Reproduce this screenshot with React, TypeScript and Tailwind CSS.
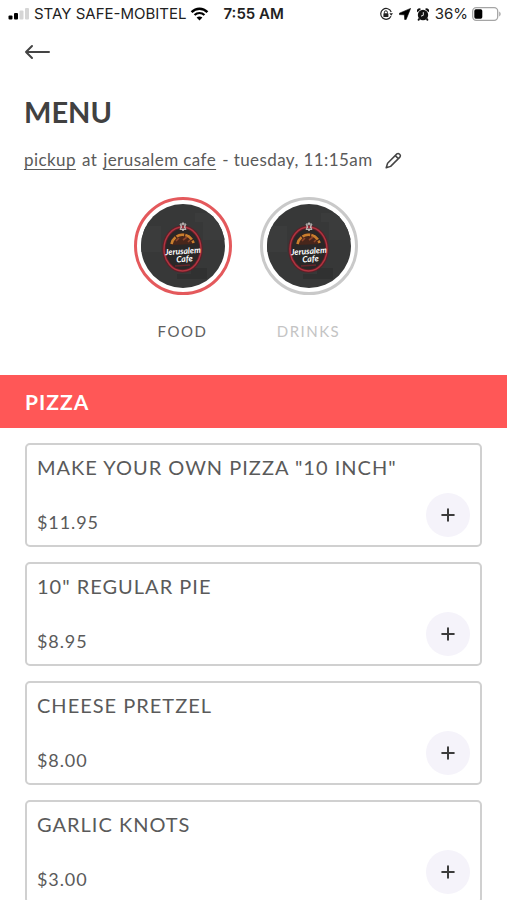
import { Plus } from "lucide-react";

interface MenuItem {
  name: string;
  price: string;
}

interface CategoryButtonProps {
  label: string;
  active?: boolean;
}

const items: MenuItem[] = [
  { name: 'MAKE YOUR OWN PIZZA "10 INCH"', price: "$11.95" },
  { name: '10" REGULAR PIE', price: "$8.95" },
  { name: "CHEESE PRETZEL", price: "$8.00" },
  { name: "GARLIC KNOTS", price: "$3.00" },
];

const StatusBar = () => (
  <div className="flex h-7 items-center justify-between pr-1.5 pl-2 font-['Inter',sans-serif] text-[15px] text-[#222]">
    <div className="flex items-center">
      <svg width="22" height="12" viewBox="0 0 22 12" aria-hidden="true">
        <rect x="0.5" y="7.5" width="4" height="4" rx="1" fill="#000" />
        <rect x="6" y="5" width="4" height="6.5" rx="1" fill="#000" />
        <rect x="11.5" y="2.5" width="4" height="9" rx="1" fill="#d5d5d5" />
        <rect x="17" y="0" width="4" height="11.5" rx="1" fill="#d5d5d5" />
      </svg>
      <span className="ml-1">STAY SAFE-MOBITEL</span>
      <svg className="ml-1" width="19" height="14" viewBox="0 0 20 15" fill="none" stroke="#000" aria-hidden="true">
        <path d="M1.5 5.5C6.3 0.6 13.7 0.6 18.5 5.5" strokeWidth="2.6" />
        <path d="M4.7 8.6C7.7 5.7 12.3 5.7 15.3 8.6" strokeWidth="2.4" />
        <path d="M10 14.5L6.9 11.3C8.7 9.7 11.3 9.7 13.1 11.3Z" fill="#000" stroke="none" />
      </svg>
      <span className="ml-3.5 font-semibold">7:55 AM</span>
    </div>
    <div className="flex items-center">
      <svg width="14" height="14" viewBox="0 0 14 14" fill="none" stroke="#222" aria-hidden="true">
        <path d="M12.2 5A5.4 5.4 0 1 0 12 9.2" strokeWidth="1.2" />
        <path d="M10.4 6.3H14L12.2 8.8Z" fill="#222" stroke="none" />
        <rect x="4.4" y="6.3" width="5" height="3.8" rx="0.6" fill="#222" stroke="none" />
        <path d="M5.4 6.5V5.3A1.5 1.5 0 0 1 8.4 5.3V6.5" strokeWidth="1" />
      </svg>
      <svg className="ml-1.5" width="12" height="12" viewBox="0 0 12 12" fill="#000" aria-hidden="true">
        <path d="M11.6 0.4L0.4 5.2V6.6L5.4 6.8L5.7 11.6H7.1Z" stroke="#000" strokeWidth="0.6" />
      </svg>
      <svg className="ml-1.5" width="12" height="13" viewBox="0 0 12 13" aria-hidden="true">
        <circle cx="6" cy="7" r="5.2" fill="#111" />
        <path d="M0.5 4.2A2 2 0 0 1 4 1.1ZM11.5 4.2A2 2 0 0 0 8 1.1Z" fill="#111" />
        <path d="M2.4 10.5L1.2 12.4M9.6 10.5L10.8 12.4" stroke="#111" strokeWidth="1.8" />
        <path d="M6.3 4.2V7.3L4 8.1" fill="none" stroke="#fff" strokeWidth="0.9" />
      </svg>
      <span className="ml-1.5">36%</span>
      <svg className="ml-1" width="29" height="14" viewBox="0 0 29 14" aria-hidden="true">
        <rect x="0.7" y="0.7" width="25" height="12.6" rx="3.5" fill="none" stroke="#a5a5a5" strokeWidth="1.3" />
        <rect x="2.3" y="2.3" width="8" height="9.4" rx="1.6" fill="#000" />
        <path d="M27.2 4.6C29.1 5.4 29.1 8.6 27.2 9.4Z" fill="#a5a5a5" />
      </svg>
    </div>
  </div>
);

const CafeLogo = () => (
  <svg className="h-full w-full rounded-full" viewBox="0 0 84 84" aria-hidden="true">
    <rect width="84" height="84" fill="#373838" />
    <path d="M0 22H20V48H0ZM54 9H84V36H62V18H54Z" fill="#3b3c3c" />
    <path d="M36 70H50V64H66V75H36Z" fill="#303131" />
    <ellipse cx="41.5" cy="45" rx="18.5" ry="22" fill="#2a2727" stroke="#5c2028" strokeWidth="3.4" />
    <ellipse cx="41.5" cy="45" rx="18.5" ry="22" fill="none" stroke="#b23440" strokeWidth="1.4" />
    <path d="M30 41A11.5 11.5 0 0 1 53 40Z" fill="#48261b" />
    <path d="M30.5 40A11.3 11.3 0 0 1 52.5 39" fill="none" stroke="#c97f2e" strokeWidth="2.6" strokeDasharray="8 1.2" />
    <path d="M35 37L38 34M42 36L46 33M47 38L49 36" stroke="#8d452a" strokeWidth="1.6" />
    <path d="M39 20L42 27L45 20ZM39 25.5H45L42 18.5Z" fill="none" stroke="#c5c0bd" strokeWidth="0.9" />
    <g transform="rotate(-4 42 49)" fill="#fff" textAnchor="middle" className="font-['Lato',sans-serif] font-bold italic">
      <text x="42" y="50" fontSize="8.5">Jerusalem</text>
      <text x="43" y="58" fontSize="8.5">Cafe</text>
    </g>
    <path d="M34 62L49 61" stroke="#65262c" strokeWidth="1.4" />
  </svg>
);

const CategoryButton: React.FC<CategoryButtonProps> = ({ label, active }) => (
  <button type="button" className="flex flex-col items-center" aria-pressed={!!active}>
    <span
      className={
        active
          ? "h-[98px] w-[98px] rounded-full border-3 border-[#e4595c] p-1"
          : "h-[98px] w-[98px] rounded-full border-3 border-[#c9c9c9] p-1"
      }
    >
      <CafeLogo />
    </span>
    <span
      className={
        active
          ? "mt-6 text-[15px] leading-6 tracking-widest text-[#606060]"
          : "mt-6 text-[15px] leading-6 tracking-widest text-[#c4c4c4]"
      }
    >
      {label}
    </span>
  </button>
);

const MenuCard: React.FC<{ item: MenuItem }> = ({ item }) => (
  <li className="flex h-[104px] flex-col justify-between rounded-[5px] border-2 border-[#d0d0d0] px-2.5 pt-1.5 pb-2">
    <h3 className="text-xl leading-8 tracking-wider">{item.name}</h3>
    <div className="flex items-center justify-between">
      <span className="pt-3.5 text-lg leading-6 tracking-wider">{item.price}</span>
      <button
        type="button"
        aria-label={`Add ${item.name}`}
        className="flex h-11 w-11 items-center justify-center rounded-full bg-[#f5f3fa] text-[#3c3c3c]"
      >
        <Plus size={20} strokeWidth={2.4} />
      </button>
    </div>
  </li>
);

const App = () => {
  return (
    <div className="min-h-screen bg-white font-['Lato',sans-serif] text-[#5a5a5a]">
      <StatusBar />
      <header className="px-6">
        <button type="button" aria-label="Back" className="mt-3 flex h-6 items-center">
          <svg width="26" height="16" viewBox="0 0 26 16" fill="none" stroke="#444" strokeWidth="2" strokeLinecap="round" strokeLinejoin="round">
            <path d="M25 8H2M8 2L2 8L8 14" />
          </svg>
        </button>
        <h1 className="mt-7 text-[29px] leading-10 font-bold text-[#414141]">MENU</h1>
        <div className="mt-4 flex items-center text-[17px] leading-6 tracking-wide whitespace-nowrap">
          <a href="#pickup" className="underline underline-offset-3">pickup</a>
          <span className="mx-1.5">at</span>
          <a href="#location" className="underline underline-offset-3">jerusalem cafe</a>
          <span className="ml-1.5">- tuesday, 11:15am</span>
          <button type="button" aria-label="Edit pickup details" className="ml-3">
            <svg width="17" height="17" viewBox="0 0 17 17" fill="none" stroke="#444" strokeWidth="1.5" strokeLinejoin="round">
              <path d="M1.2 15.8L2.6 11.2L11.9 1.9C13.6 0.5 16.4 3.2 14.9 5.1L5.6 14.4ZM10.3 3.6L13.3 6.6" />
            </svg>
          </button>
        </div>
      </header>

      <nav className="mt-[25px] flex justify-center gap-7 pr-4" aria-label="Menu categories">
        <CategoryButton label="FOOD" active />
        <CategoryButton label="DRINKS" />
      </nav>

      <main className="mt-8">
        <h2 className="bg-[#ff5757] px-[25px] py-3 text-[21px] leading-[29px] font-bold tracking-wider text-white">PIZZA</h2>
        <ul className="mt-[15px] flex flex-col gap-[15px] px-[25px]">
          {items.map((item) => (
            <MenuCard key={item.name} item={item} />
          ))}
        </ul>
      </main>
    </div>
  );
};

export default App;
